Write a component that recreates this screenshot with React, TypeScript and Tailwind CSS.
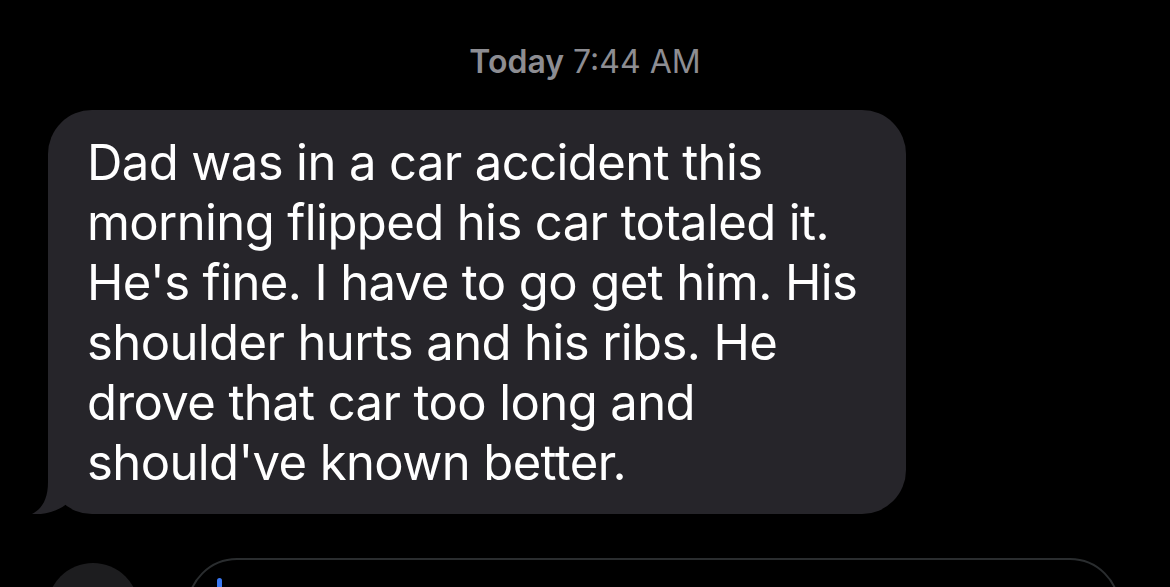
export default function App() {
  const lines = [
    'Dad was in a car accident this',
    'morning flipped his car totaled it.',
    "He's fine. I have to go get him. His",
    'shoulder hurts and his ribs. He',
    'drove that car too long and',
    "should've known better.",
  ];

  return (
    <div className="h-[587px] w-full overflow-hidden bg-black flex flex-col font-['Inter','Liberation_Sans',sans-serif]">
      {/* Timestamp */}
      <div className="pt-[42px] h-[82px] text-center text-[32px] leading-[40px] text-[#8d8d92]">
        <span className="font-semibold">Today</span> <span>7:44 AM</span>
      </div>

      {/* Received bubble */}
      <div className="relative ml-[48px] mt-[28px] w-[858px] rounded-[44px] bg-[#26252a] pl-[39px] pr-[20px] pt-[23px] pb-[21px] text-[49px] leading-[60px] tracking-[-0.6px] text-white">
        {lines.map((l, i) => (
          <div key={i} className="whitespace-nowrap">{l}</div>
        ))}
        <svg
          className="absolute left-[-16px] bottom-0"
          width="40"
          height="60"
          viewBox="0 0 40 60"
        >
          <path d="M16,4 L16,28 C16,45 10,55 0,60 C12,61 25,58 36,49 L36,4 Z" fill="#26252a" />
        </svg>
      </div>

      {/* Input row */}
      <div className="mt-[44px] flex items-start">
        <div className="ml-[47px] mt-[5px] h-[92px] w-[92px] shrink-0 rounded-full bg-[#1d1d1f]" />
        <div className="ml-[48px] h-[100px] w-[933px] shrink-0 rounded-full border-2 border-[#2a2d2f] pl-[28px] pt-[18px]">
          <div className="h-[40px] w-[5px] rounded-full bg-[#3a78f2]" />
        </div>
      </div>
    </div>
  );
}
